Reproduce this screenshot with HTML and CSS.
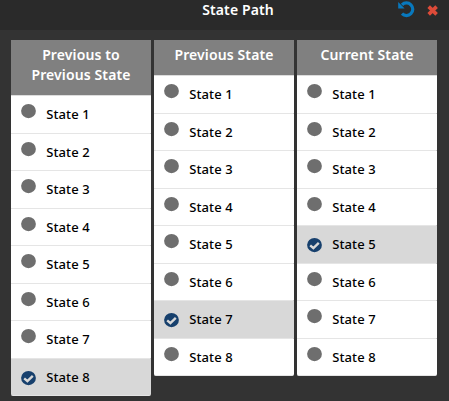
FILE: index.html
```
<!DOCTYPE html>
<html lang="en">
<head>
<meta charset="utf-8">
<title>State Path</title>
<link rel="stylesheet" href="styles.css">
</head>
<body>
<header class="titlebar">
  <h1 class="title">State Path</h1>
  <div class="actions">
    <svg class="undo" viewBox="0 0 17 17" width="17" height="17"><path d="M4 3.8A6.3 6.3 0 1 1 4 12.7" fill="none" stroke="#0878bd" stroke-width="3.2"/><path d="M.2 1.1V7.4H6.6Z" fill="#0878bd"/></svg>
    <svg class="close" viewBox="0 0 11 11" width="11" height="11"><path d="M1.7 1.7L9.6 9.3M9.6 1.7L1.7 9.3" stroke="#dd4b39" stroke-width="3.7"/></svg>
  </div>
</header>
<main class="columns" id="columns"></main>
<script src="script.js"></script>
</body>
</html>
```
FILE: styles.css
```
* { box-sizing: border-box; }
body {
  margin: 0;
  height: 401px;
  overflow: hidden;
  background: #333;
  font-family: "Noto Sans", "Open Sans", sans-serif;
  font-weight: 600;
}
.titlebar {
  display: grid;
  grid-template-columns: 1fr auto 1fr;
  height: 30px;
  padding-right: 11px;
  padding-left: 38px;
  background: #2a2a2a;
}
.title {
  grid-column: 2;
  margin: 0;
  color: #fff;
  font-size: 14px;
  font-weight: 600;
  letter-spacing: .1px;
  line-height: 20px;
}
.actions {
  display: flex;
  justify-content: flex-end;
  align-items: flex-start;
  gap: 12px;
}
.undo { margin-top: 1px; }
.close { margin-top: 5px; }
.columns {
  display: flex;
  align-items: flex-start;
  gap: 3px;
  padding: 10px 11px;
}
.column { width: 140px; }
.heading {
  margin: 0;
  padding: 5px 12px 10px;
  background: #808080;
  color: #fff;
  font-size: 14px;
  font-weight: 600;
  letter-spacing: .12px;
  line-height: 20px;
  text-align: center;
}
.states {
  margin: 0;
  padding: 0;
  list-style: none;
  border-top: 1px solid #ddd;
  border-radius: 0 0 2px 2px;
  overflow: hidden;
}
.state {
  display: flex;
  height: 37.55px;
  padding: 8px 10px 0;
  gap: 10.2px;
  background: #fff;
  border-bottom: 1px solid #e5e5e5;
  border-radius: 0 0 1px 0;
  color: #000;
  font-size: 13px;
  font-weight: 500;
  letter-spacing: .1px;
  line-height: 20px;
}
.selected { background: #d8d8d8; }
.mark { width: 15px; height: 15px; flex: none; }
.selected .mark { margin-top: 4px; }
```
FILE: script.js
```
const columns = [
  { heading: "Previous to Previous State", selected: 8 },
  { heading: "Previous State", selected: 7 },
  { heading: "Current State", selected: 5 }
];
const dot = '<svg class="mark" viewBox="0 0 15 15"><ellipse cx="7.5" cy="7.1" rx="7.4" ry="7.1" fill="#6e6e6e"/></svg>';
const check = '<svg class="mark" viewBox="0 0 15 15"><ellipse cx="7.5" cy="7.1" rx="7.4" ry="7.1" fill="#17406d"/><path d="M3.2 7.3L6.4 10.1L11.8 4.8" fill="none" stroke="#d8d8d8" stroke-width="2.4"/></svg>';
document.getElementById("columns").innerHTML = columns.map(c =>
  `<section class="column"><h2 class="heading">${c.heading}</h2><ul class="states">` +
  [1, 2, 3, 4, 5, 6, 7, 8].map(n =>
    `<li class="state${n === c.selected ? " selected" : ""}">${n === c.selected ? check : dot}<span class="label">State ${n}</span></li>`
  ).join("") + "</ul></section>").join("");
```
